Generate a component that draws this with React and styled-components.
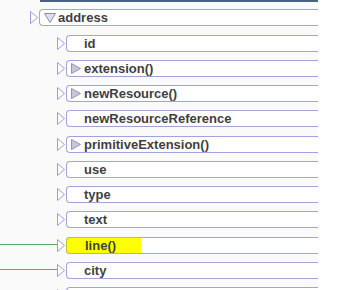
import React from 'react';
import styled, { createGlobalStyle } from 'styled-components';

const GlobalStyle = createGlobalStyle`
  html, body {
    margin: 0;
    padding: 0;
    background: #ffffff;
    overflow: hidden;
  }
`;

const rows = [
  { name: 'address', level: 0, expander: 'down' },
  { name: 'id', level: 1 },
  { name: 'extension()', level: 1, expander: 'right' },
  { name: 'newResource()', level: 1, expander: 'right' },
  { name: 'newResourceReference', level: 1 },
  { name: 'primitiveExtension()', level: 1, expander: 'right' },
  { name: 'use', level: 1 },
  { name: 'type', level: 1 },
  { name: 'text', level: 1 },
  { name: 'line()', level: 1, highlighted: true, wired: true },
  { name: 'city', level: 1, wired: true },
  { name: 'district', level: 1 },
];

const indentWidth = [30, 57];

const Canvas = styled.div`
  width: 318px;
  height: 290px;
  overflow: hidden;
  background: #fafafa;
  font-family: "Liberation Sans", Arial, sans-serif;
`;

// bottom edge of the parent element above, scrolled out of view
const ParentEdge = styled.div`
  margin-left: 40px;
  height: 2px;
  background: #43658a;
`;

const Tree = styled.div`
  display: flex;
  flex-direction: column;
  gap: 8.25px;
  padding-top: 7.3px;
`;

const Row = styled.div`
  display: flex;
  align-items: center;
  height: 17px;
  margin-right: -8px;
`;

const Indent = styled.div`
  flex: 0 0 ${p => p.$width}px;
  align-self: stretch;
  position: relative;

  &::after {
    content: '';
    display: ${p => (p.$wired ? 'block' : 'none')};
    position: absolute;
    left: 0;
    right: 0;
    top: 7px;
    height: 1px;
    background: #5caa5c;
  }
`;

const Connector = styled.svg`
  flex: 0 0 8px;
  margin-right: 1px;
  display: block;
`;

const Box = styled.div`
  flex: 1;
  height: 17px;
  box-sizing: border-box;
  display: flex;
  background: #ffffff;
  border: 1px solid #a3a3dc;
  border-right: none;
  border-radius: 4px 0 0 4px;
`;

const Cell = styled.div`
  display: flex;
  align-items: center;
  gap: 2px;
  padding-left: 4px;
  box-sizing: border-box;
  ${p =>
    p.$highlighted
      ? `
    width: 75px;
    height: 17px;
    margin: -1px 0 -1px -1px;
    padding-left: 5px;
    background: #ffff00;
    border: 1px solid #c2c23a;
    border-right: none;
    border-radius: 4px 0 0 4px;
  `
      : ''}
`;

const ExpanderSlot = styled.div`
  flex: 0 0 11px;
  height: 12px;
  display: flex;
  align-items: center;
`;

const Label = styled.span`
  font-size: 13px;
  font-weight: bold;
  color: #3f3f3f;
  line-height: 15px;
  white-space: nowrap;
`;

function Expander({ kind }) {
  if (kind === 'down') {
    return (
      <svg width="12" height="10" viewBox="0 0 12 10">
        <polygon points="0.5,0.5 11.5,0.5 6,9.5" fill="#dedeec" stroke="#8d8da6" strokeWidth="1" />
      </svg>
    );
  }
  if (kind === 'right') {
    return (
      <svg width="10" height="11" viewBox="0 0 10 11">
        <polygon points="0.5,0.5 9.5,5.5 0.5,10.5" fill="#c6c6e0" stroke="#9494b6" strokeWidth="1" />
      </svg>
    );
  }
  return null;
}

function TreeRow({ row }) {
  return (
    <Row>
      <Indent $width={indentWidth[row.level]} $wired={row.wired} />
      <Connector width="8" height="13" viewBox="0 0 8 13">
        <polygon points="0.5,0.5 7.5,6.5 0.5,12.5" fill="#ffffff" stroke="#9c9ce2" strokeWidth="1" />
      </Connector>
      <Box>
        <Cell $highlighted={row.highlighted}>
          <ExpanderSlot>
            <Expander kind={row.expander} />
          </ExpanderSlot>
          <Label>{row.name}</Label>
        </Cell>
      </Box>
    </Row>
  );
}

export default function App() {
  return (
    <>
      <GlobalStyle />
      <Canvas>
        <ParentEdge />
        <Tree>
          {rows.map(row => (
            <TreeRow key={row.name} row={row} />
          ))}
        </Tree>
      </Canvas>
    </>
  );
}
